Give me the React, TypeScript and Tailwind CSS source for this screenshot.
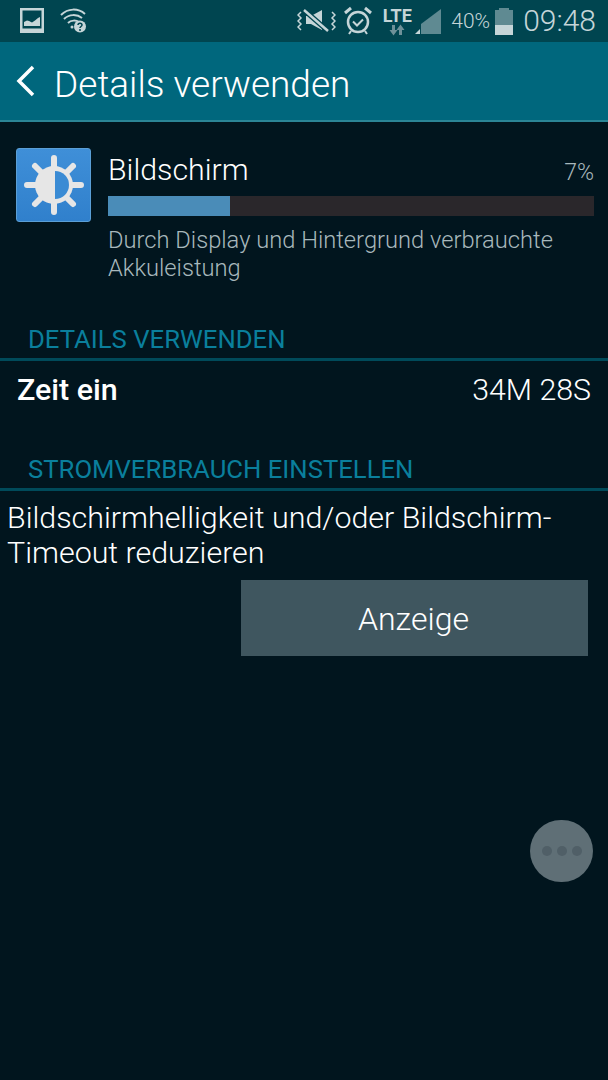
const font = "font-['Roboto',sans-serif]";

function StatusBar() {
  return (
    <div className="h-[42px] bg-[#004550] flex items-center pl-[19px] pr-[12px] text-[#c5d5d8]">
      <svg width="26" height="27" viewBox="0 0 26 27" className="mt-[-1px]">
        <path fillRule="evenodd" fill="#c5d5d8" d="M1 1h24v25H1zM3.500 3.500v18h19v-18z" />
        <path fill="#c5d5d8" d="M5 19v-4l3-1.500 2 .5 3 1.500 3-2 3-2.500 2-1v9z" />
      </svg>
      <svg width="30" height="26" viewBox="0 0 30 26" className="ml-[15px]" fill="none" stroke="#c5d5d8" strokeWidth="2">
        <path d="M1 7C8 0 18 0 25 6" />
        <path d="M4 11c5-5 13-5 18-1" />
        <path d="M8 15c3-3 8-3 11-1" />
        <circle cx="12" cy="19" r="1.500" fill="#c5d5d8" stroke="none" />
        <circle cx="20" cy="18.500" r="6" fill="#c5d5d8" stroke="none" />
        <path d="M18 17c0-2.500 4-2.500 4 0 0 1.500-2 1.500-2 3M20 21v2" stroke="#004550" strokeWidth="1.500" />
      </svg>
      <div className="flex-1" />
      <svg width="39" height="28" viewBox="0 0 39 28" fill="none" stroke="#c5d5d8" strokeWidth="1.500">
        <path d="M4 5l-3 3 3 3-3 3 3 3-3 3 3 3M35 5l3 3-3 3 3 3-3 3 3 3-3 3" />
        <path fill="#c5d5d8" stroke="none" d="M9 9h5l11-6v20l-11-6H9z" />
        <path d="M7 3l24 21" stroke="#004550" strokeWidth="5" />
        <path d="M7 3l24 21" strokeWidth="2.500" />
      </svg>
      <svg width="30" height="30" viewBox="0 0 30 30" className="ml-[7px]" fill="none" stroke="#c5d5d8">
        <circle cx="15" cy="16" r="10" strokeWidth="2.500" />
        <path d="M10 15.500l4 4 6-6" strokeWidth="2" />
        <path d="M2 7l6-5M28 7l-6-5" strokeWidth="3" />
        <path d="M8 25l-2 3M22 25l2 3" strokeWidth="2" />
      </svg>
      <div className="ml-[9px] flex flex-col items-center w-[30px] mt-[1px]">
        <span className={`${font} text-[18px] font-bold leading-[16px]`}>LTE</span>
        <svg width="16" height="12" viewBox="0 0 16 12" fill="#6f9199">
          <path d="M3 1h3v5h2.500L4.500 11.500.5 6H3zM10 11h3V6h2.500L11.500.5 7.500 6H10z" />
        </svg>
      </div>
      <svg width="28" height="28" viewBox="0 0 28 28" className="ml-[2px] mt-[1px]">
        <path fill="#5f8a92" d="M7 26V16L27 1v25z" />
        <path fill="#c5d5d8" d="M1 26l5-5v5z" />
      </svg>
      <span className={`${font} ml-[9px] text-[21px] font-light leading-none`}>40%</span>
      <div className="ml-[5px] w-[18px] h-[27px] flex flex-col items-center">
        <div className="w-[10px] h-[2px] bg-[#5f8a92]" />
        <div className="w-[18px] h-[15px] bg-[#5f8a92]" />
        <div className="w-[18px] h-[10px] bg-[#c5d5d8]" />
      </div>
      <span className={`${font} ml-[10px] text-[30px] font-light leading-none`}>09:48</span>
    </div>
  );
}

function SectionHeader({ label, className }: { label: string; className: string }) {
  return (
    <div className={`${className} h-[35px] border-b-[3px] border-[#004a5a] pl-[28px] text-[25.700px] leading-[26px] text-[#0a7f9c]`}>
      {label}
    </div>
  );
}

export default function App() {
  return (
    <div className={`${font} w-[608px] h-[1080px] bg-[#01151e] flex flex-col relative overflow-hidden`}>
      <StatusBar />
      <div className="h-[80px] bg-[#00677d] border-b-2 border-[#2b8596] flex items-center pl-[16px] pt-[6px]">
        <svg width="20" height="32" viewBox="0 0 20 32" fill="none" stroke="#fff" strokeWidth="3.500" className="mt-[-6px]">
          <path d="M17 2L3 16l14 14" />
        </svg>
        <span className="ml-[18px] text-[37px] font-light leading-none text-white">Details verwenden</span>
      </div>

      <div className="flex pl-[16px] pr-[14px] pt-[26px]">
        <div className="w-[75px] h-[74px] rounded-[3px] bg-gradient-to-b from-[#3f8fd8] to-[#3080cc] border border-[#5b9fd6] flex items-center justify-center">
          <svg width="60" height="60" viewBox="0 0 60 60">
            <g stroke="#e6e6e6" strokeWidth="6" strokeLinecap="round">
              <path d="M30 3v54M3 30h54M11 11l38 38M49 11L11 49" />
            </g>
            <circle cx="30" cy="30" r="19" fill="#e6e6e6" />
            <path d="M31 16a14 14 0 0 1 0 28z" fill="#3a8bd4" />
          </svg>
        </div>
        <div className="ml-[17px] flex-1 pt-[4px]">
          <div className="flex justify-between items-start h-[35px]">
            <span className="text-[30.300px] font-light leading-[36px] text-white">Bildschirm</span>
            <span className="text-[23px] font-light leading-[42px] text-[#a8b8bc]">7%</span>
          </div>
          <div className="mt-[9px] h-[20px] bg-[#2a272b]">
            <div className="h-full w-[25%] bg-[#4a8cb8]" />
          </div>
          <p className="mt-[10px] text-[23.700px] font-light leading-[28px] text-[#a8b8bc]">
            Durch Display und Hintergrund verbrauchte Akkuleistung
          </p>
        </div>
      </div>

      <SectionHeader label="DETAILS VERWENDEN" className="mt-[44px]" />
      <div className="flex justify-between items-center h-[58px] pl-[17px] pr-[17px] text-white">
        <span className="text-[30.400px] font-medium">Zeit ein</span>
        <span className="text-[30.300px] font-light">34M 28S</span>
      </div>

      <SectionHeader label="STROMVERBRAUCH EINSTELLEN" className="mt-[37px]" />
      <p className="mt-[9px] pl-[7px] pr-[40px] text-[30.400px] font-light leading-[35px] text-white">
        Bildschirmhelligkeit und/oder Bildschirm-Timeout reduzieren
      </p>
      <div className="mt-[10px] mr-[20px] self-end w-[347px] h-[76px] bg-[#3f565f] pr-[2px] pt-[2px] flex items-center justify-center text-[32px] font-light text-white">
        Anzeige
      </div>

      <div className="absolute left-[530px] top-[820px] w-[63px] h-[62px] rounded-full bg-[#5f6f76] flex items-center justify-center gap-[5px]">
        <span className="w-[10px] h-[10px] rounded-full bg-[#505f67]" />
        <span className="w-[10px] h-[10px] rounded-full bg-[#505f67]" />
        <span className="w-[10px] h-[10px] rounded-full bg-[#505f67]" />
      </div>
    </div>
  );
}
